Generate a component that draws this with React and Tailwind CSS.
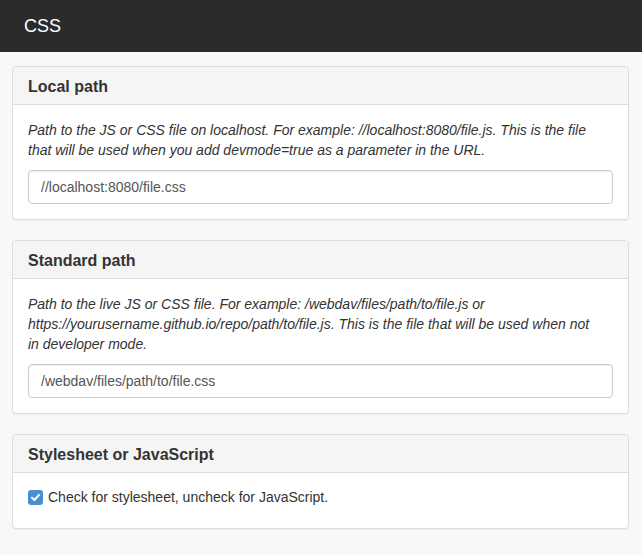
import React from 'react';

const Panel = ({ title, children, bodyClass = 'p-[15px]' }) => (
  <div className="bg-white border border-[#dddddd] rounded-[4px] shadow-[0_1px_1px_rgba(0,0,0,0.05)]">
    <div className="bg-[#f5f5f5] border-b border-[#dddddd] rounded-t-[3px] px-[15px] pt-[10px] pb-[8px] text-[16px] leading-[19px] font-bold text-[#333333]">
      {title}
    </div>
    <div className={bodyClass}>{children}</div>
  </div>
);

const PathInput = ({ value }) => (
  <input
    type="text"
    defaultValue={value}
    className="block w-full h-[34px] px-[12px] border border-[#cccccc] rounded-[4px] text-[14px] text-[#555555] bg-white shadow-[inset_0_1px_1px_rgba(0,0,0,0.075)] outline-none"
  />
);

const App = () => {
  return (
    <div className="min-h-[555px] bg-[#f8f8f8] text-[14px] leading-[20px] text-[#333333]" style={{ fontFamily: '"Liberation Sans", Arial, sans-serif' }}>
      <div className="h-[52px] bg-[#2b2b2b] flex items-center px-[24px]">
        <span className="text-white text-[18px]">CSS</span>
      </div>

      <div className="pl-[12px] pr-[13px] pt-[14px] flex flex-col gap-[20px]">
        <Panel title="Local path">
          <p className="italic mb-[10px]">
            Path to the JS or CSS file on localhost. For example: //localhost:8080/file.js. This is the file
            <br />
            that will be used when you add devmode=true as a parameter in the URL.
          </p>
          <PathInput value="//localhost:8080/file.css" />
        </Panel>

        <Panel title="Standard path">
          <p className="italic mb-[10px]">
            Path to the live JS or CSS file. For example: /webdav/files/path/to/file.js or
            <br />
            https://yourusername.github.io/repo/path/to/file.js. This is the file that will be used when not
            <br />
            in developer mode.
          </p>
          <PathInput value="/webdav/files/path/to/file.css" />
        </Panel>

        <Panel title="Stylesheet or JavaScript" bodyClass="px-[15px] pt-[14px] pb-[21px]">
          <label className="flex items-center gap-[5px]">
            <span className="w-[15px] h-[15px] rounded-[3px] bg-[#4a8fd4] flex items-center justify-center">
              <svg width="11" height="11" viewBox="0 0 10 10">
                <path d="M1.8 5.2 L4 7.3 L8.3 2.6" fill="none" stroke="white" strokeWidth="1.8" strokeLinecap="round" strokeLinejoin="round" />
              </svg>
            </span>
            <span>Check for stylesheet, uncheck for JavaScript.</span>
          </label>
        </Panel>
      </div>
    </div>
  );
};

export default App;
